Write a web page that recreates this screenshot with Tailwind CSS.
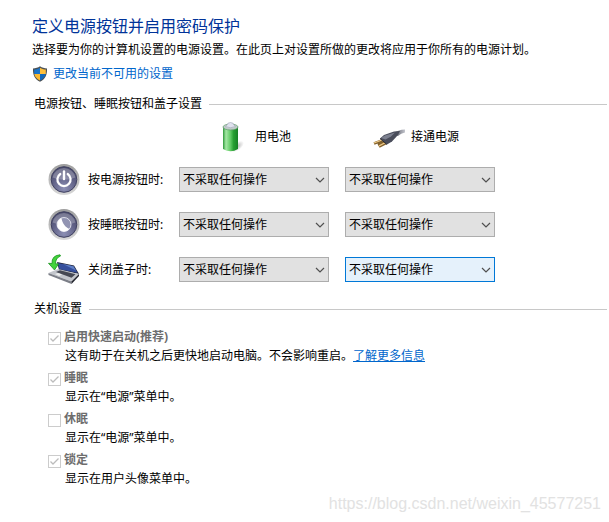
<!DOCTYPE html>
<html lang="zh-CN">
<head>
  <meta charset="utf-8">
  <meta name="viewport" content="width=device-width, initial-scale=1.0">
  <title>电源选项</title>
  <script src="https://cdn.jsdelivr.net/npm/@tailwindcss/browser@4"></script>
</head>
<body class="relative min-h-screen bg-white pt-3.5 text-xs text-black font-['Noto_Sans','Noto_Sans_CJK_SC',sans-serif]">

  <!-- Header -->
  <header class="pl-8">
    <h1 class="text-base leading-6 text-[#003399]">定义电源按钮并启用密码保护</h1>
    <p class="leading-6">选择要为你的计算机设置的电源设置。在此页上对设置所做的更改将应用于你所有的电源计划。</p>
    <a href="#" class="flex items-center gap-[5px] leading-6 text-[#0066cc]">
      <svg class="h-4 w-4" viewBox="0 0 16 16">
        <path d="M8 .3 C6 1.8 3.6 2.4 1 2.4 C.7 8.500 2.500 13 8 15.800 C13.500 13 15.300 8.500 15 2.400 C12.400 2.400 10 1.800 8 .3Z" fill="#4b5054"/>
        <path d="M8 1.700 C6.300 2.800 4.300 3.400 2.200 3.500 V8 H8Z" fill="#1b74c9"/>
        <path d="M8 1.700 C9.700 2.800 11.700 3.400 13.800 3.500 V8 H8Z" fill="#fdbf3c"/>
        <path d="M2.300 8 H8 V14.500 C4.500 12.800 2.800 10.700 2.300 8Z" fill="#fdb92e"/>
        <path d="M13.700 8 H8 V14.500 C11.500 12.800 13.200 10.700 13.700 8Z" fill="#0f68bd"/>
      </svg>
      <span>更改当前不可用的设置</span>
    </a>
  </header>

  <!-- Power and sleep buttons, lid -->
  <section class="mt-1.5 pl-[34px]">
    <div class="flex items-center gap-[7px] pr-0.5">
      <h2 class="leading-6">电源按钮、睡眠按钮和盖子设置</h2>
      <div class="h-px flex-1 bg-[#c8c8c8]"></div>
    </div>

    <div class="grid grid-cols-[115px_150px_150px] items-center gap-x-4 pl-3.5">
      <div class="col-start-2 flex h-[41px] items-center gap-1.5 pl-[38px]">
        <svg class="h-8 w-8" viewBox="0 0 32 32">
          <defs>
            <linearGradient id="cell" x1="0" x2="1">
              <stop offset="0" stop-color="#2f9a3a"/><stop offset=".2" stop-color="#a5e8a5"/><stop offset=".5" stop-color="#5fc963"/><stop offset=".7" stop-color="#27a032"/><stop offset="1" stop-color="#168024"/>
            </linearGradient>
            <radialGradient id="shade"><stop stop-color="#999" stop-opacity=".7"/><stop offset="1" stop-color="#999" stop-opacity="0"/></radialGradient>
          </defs>
          <ellipse cx="20" cy="25.500" rx="8" ry="4" fill="url(#shade)" transform="rotate(-35 20 25.500)"/>
          <path d="M6 6 V28 Q13.500 32.500 21 28 V6Z" fill="url(#cell)"/>
          <ellipse cx="13.500" cy="6" rx="7.500" ry="3" fill="#c0cbc8" stroke="#5f9a6c" stroke-width=".7"/>
          <path d="M8.500 5.500 Q10.500 4 11 2.200 Q13.500 .8 16 2.200 Q16.500 4 18.500 5.500 Q13.500 8 8.500 5.500Z" fill="#dfe1ee" stroke="#a0a6b5" stroke-width=".6"/>
        </svg>
        <span>用电池</span>
      </div>
      <div class="flex h-[41px] items-center gap-1.5 pl-7">
        <svg class="h-8 w-8" viewBox="0 0 32 32">
          <defs>
            <linearGradient id="cord" x1="0" x2="1"><stop stop-color="#4a4c58"/><stop offset="1" stop-color="#c4c6ce"/></linearGradient>
          </defs>
          <path d="M20 13 Q25 8.500 32 8.500 V11.500 Q28 12 25 15Z" fill="url(#cord)"/>
          <path d="M9 19.500 L1 22.500 M13 22 L6 25.500 M11 21 L5 24" stroke="#80602d" stroke-width="2.600"/>
          <path d="M9 19 L1 22 M12.500 21.500 L6 24.800" stroke="#efcb8a" stroke-width="1.300"/>
          <path d="M7 17.500 L11 14 L21 10.500 L27 10 L25 14 L19 20.500 L14 23.500Z" fill="#4a4d5b"/>
          <path d="M8 17 L12 14.500 L22 11.500 L18 15.500 L12.500 18.500Z" fill="#7d8190"/>
          <path d="M7 17.500 L14 23.500" stroke="#292b35"/>
        </svg>
        <span>接通电源</span>
      </div>
    </div>

    <div class="grid auto-rows-[45px] grid-cols-[115px_150px_150px] items-center gap-x-4 pl-3.5">
      <div class="flex items-center gap-2">
        <svg class="h-8 w-8 shrink-0" viewBox="0 0 32 32">
          <defs>
            <linearGradient id="ring" x1="0" y1="0" x2="0" y2="1"><stop stop-color="#9c9c9c"/><stop offset="1" stop-color="#d8d8d8"/></linearGradient>
            <radialGradient id="disc" cx=".5" cy=".85" r=".8"><stop stop-color="#8c8fb4"/><stop offset=".6" stop-color="#606186"/><stop offset="1" stop-color="#4a4b6c"/></radialGradient>
          </defs>
          <circle cx="16" cy="15.500" r="15.500" fill="url(#ring)"/>
          <circle cx="16" cy="15.500" r="12.800" fill="url(#disc)" stroke="#3f4060"/>
          <path d="M4.500 13.500 A11.700 11.700 0 0 1 27.500 13.500 Q16 18 4.500 13.500Z" fill="#fff" opacity=".25"/>
          <path d="M12.300 10 A6.600 6.600 0 1 0 19.700 10" fill="none" stroke="#fff" stroke-width="2.200" stroke-linecap="round"/>
          <path d="M16 7.500 V15" stroke="#fff" stroke-width="2.400" stroke-linecap="round"/>
        </svg>
        <span class="whitespace-nowrap">按电源按钮时:</span>
      </div>
      <div class="relative">
        <select aria-label="按电源按钮时 用电池" class="block h-[25px] w-full appearance-none border border-[#adadad] bg-[#e1e1e1] pl-[3px]"><option>不采取任何操作</option></select>
        <svg class="pointer-events-none absolute top-2 right-1 h-2.5 w-2.5" viewBox="0 0 10 10"><path d="M1 3 L5 7 L9 3" fill="none" stroke="#505050" stroke-width="1.200"/></svg>
      </div>
      <div class="relative">
        <select aria-label="按电源按钮时 接通电源" class="block h-[25px] w-full appearance-none border border-[#adadad] bg-[#e1e1e1] pl-[3px]"><option>不采取任何操作</option></select>
        <svg class="pointer-events-none absolute top-2 right-1 h-2.5 w-2.5" viewBox="0 0 10 10"><path d="M1 3 L5 7 L9 3" fill="none" stroke="#505050" stroke-width="1.200"/></svg>
      </div>

      <div class="flex items-center gap-2">
        <svg class="h-8 w-8 shrink-0" viewBox="0 0 32 32">
          <circle cx="16" cy="15.500" r="15.500" fill="url(#ring)"/>
          <circle cx="16" cy="15.500" r="12.800" fill="url(#disc)" stroke="#3f4060"/>
          <path d="M4.500 13.500 A11.700 11.700 0 0 1 27.500 13.500 Q16 18 4.500 13.500Z" fill="#fff" opacity=".25"/>
          <circle cx="16" cy="15.500" r="7" fill="#9294b2" stroke="#dddee9"/>
          <path d="M13.500 9 A7 7 0 1 0 21.500 20 C17.500 18.500 14 14 13.500 9Z" fill="#fff"/>
        </svg>
        <span class="whitespace-nowrap">按睡眠按钮时:</span>
      </div>
      <div class="relative">
        <select aria-label="按睡眠按钮时 用电池" class="block h-[25px] w-full appearance-none border border-[#adadad] bg-[#e1e1e1] pl-[3px]"><option>不采取任何操作</option></select>
        <svg class="pointer-events-none absolute top-2 right-1 h-2.5 w-2.5" viewBox="0 0 10 10"><path d="M1 3 L5 7 L9 3" fill="none" stroke="#505050" stroke-width="1.200"/></svg>
      </div>
      <div class="relative">
        <select aria-label="按睡眠按钮时 接通电源" class="block h-[25px] w-full appearance-none border border-[#adadad] bg-[#e1e1e1] pl-[3px]"><option>不采取任何操作</option></select>
        <svg class="pointer-events-none absolute top-2 right-1 h-2.5 w-2.5" viewBox="0 0 10 10"><path d="M1 3 L5 7 L9 3" fill="none" stroke="#505050" stroke-width="1.200"/></svg>
      </div>

      <div class="flex items-center gap-2">
        <svg class="h-8 w-8 shrink-0" viewBox="0 0 32 32">
          <path d="M9 8 L26 11.500 L31 20 L11 16Z" fill="#20263c"/>
          <path d="M10 9 L25.500 12.200 L29.500 18.800 L11.500 15.300Z" fill="#354f9c"/>
          <path d="M15 10 L25.500 12.200 L28 16.500Z" fill="#5f7fc6"/>
          <path d="M.5 19 L10 15 L31 20 L23.500 27.500Z" fill="#c3c6cc"/>
          <path d="M.5 19 L23.500 27.500 V30 L.5 21Z" fill="#7b7e87"/>
          <path d="M23.500 27.500 L31 20 V22 L23.500 30Z" fill="#23252e"/>
          <path d="M8 18 L12 16.300 L27.500 20.200 L23.500 23.800Z" fill="#454853"/>
          <path d="M7 20 L10 19 L14 20.500 L11 22Z" fill="#eceded"/>
          <path d="M12 .8 Q3.500 1.500 4 9.500 L.5 9.300 L6.500 16 L10.500 10 L7.500 9.800 Q7.500 4 12.500 2Z" fill="#42d33b" stroke="#1a9420" stroke-width=".8"/>
        </svg>
        <span class="whitespace-nowrap">关闭盖子时:</span>
      </div>
      <div class="relative">
        <select aria-label="关闭盖子时 用电池" class="block h-[25px] w-full appearance-none border border-[#adadad] bg-[#e1e1e1] pl-[3px]"><option>不采取任何操作</option></select>
        <svg class="pointer-events-none absolute top-2 right-1 h-2.5 w-2.5" viewBox="0 0 10 10"><path d="M1 3 L5 7 L9 3" fill="none" stroke="#505050" stroke-width="1.200"/></svg>
      </div>
      <div class="relative">
        <select aria-label="关闭盖子时 接通电源" class="block h-[25px] w-full appearance-none border border-[#0078d7] bg-[#e5f1fb] pl-[3px]"><option>不采取任何操作</option></select>
        <svg class="pointer-events-none absolute top-2 right-1 h-2.5 w-2.5" viewBox="0 0 10 10"><path d="M1 3 L5 7 L9 3" fill="none" stroke="#505050" stroke-width="1.200"/></svg>
      </div>
    </div>
  </section>

  <!-- Shutdown settings -->
  <section class="mt-[5px] pl-[34px]">
    <div class="flex items-center gap-[7px] pr-0.5">
      <h2 class="leading-6">关机设置</h2>
      <div class="h-px flex-1 bg-[#c8c8c8]"></div>
    </div>

    <div class="mt-1.5 flex flex-col gap-[3px] pl-3.5">
      <div>
        <div class="relative flex items-center gap-[3px]">
          <input id="fast" type="checkbox" checked disabled class="mt-0.5 h-[13px] w-[13px] appearance-none border border-[#cccccc] bg-white">
          <svg class="pointer-events-none absolute top-[5px] left-0 h-[13px] w-[13px]" viewBox="0 0 13 13"><path d="M2.500 6.500 L5 9 L10.500 3.500" fill="none" stroke="#bcbcbc" stroke-width="1.300"/></svg>
          <label for="fast" class="leading-5 font-bold text-[#6d6d6d]">启用快速启动(推荐)</label>
        </div>
        <p class="pl-[17px] leading-[18px]">这有助于在关机之后更快地启动电脑。不会影响重启。<a href="#" class="text-[#0066cc] underline">了解更多信息</a></p>
      </div>
      <div>
        <div class="relative flex items-center gap-[3px]">
          <input id="sleep" type="checkbox" checked disabled class="mt-0.5 h-[13px] w-[13px] appearance-none border border-[#cccccc] bg-white">
          <svg class="pointer-events-none absolute top-[5px] left-0 h-[13px] w-[13px]" viewBox="0 0 13 13"><path d="M2.500 6.500 L5 9 L10.500 3.500" fill="none" stroke="#bcbcbc" stroke-width="1.300"/></svg>
          <label for="sleep" class="leading-5 font-bold text-[#6d6d6d]">睡眠</label>
        </div>
        <p class="pl-[17px] leading-[18px]">显示在“电源”菜单中。</p>
      </div>
      <div>
        <div class="relative flex items-center gap-[3px]">
          <input id="hibernate" type="checkbox" disabled class="mt-0.5 h-[13px] w-[13px] appearance-none border border-[#cccccc] bg-white">
          <label for="hibernate" class="leading-5 font-bold text-[#6d6d6d]">休眠</label>
        </div>
        <p class="pl-[17px] leading-[18px]">显示在“电源”菜单中。</p>
      </div>
      <div>
        <div class="relative flex items-center gap-[3px]">
          <input id="lock" type="checkbox" checked disabled class="mt-0.5 h-[13px] w-[13px] appearance-none border border-[#cccccc] bg-white">
          <svg class="pointer-events-none absolute top-[5px] left-0 h-[13px] w-[13px]" viewBox="0 0 13 13"><path d="M2.500 6.500 L5 9 L10.500 3.500" fill="none" stroke="#bcbcbc" stroke-width="1.300"/></svg>
          <label for="lock" class="leading-5 font-bold text-[#6d6d6d]">锁定</label>
        </div>
        <p class="pl-[17px] leading-[18px]">显示在用户头像菜单中。</p>
      </div>
    </div>
  </section>

  <div class="pointer-events-none absolute right-2 bottom-1.5 font-['Liberation_Sans',sans-serif] text-base text-[#e2e2e2]">https://blog.csdn.net/weixin_45577251</div>
</body>
</html>
